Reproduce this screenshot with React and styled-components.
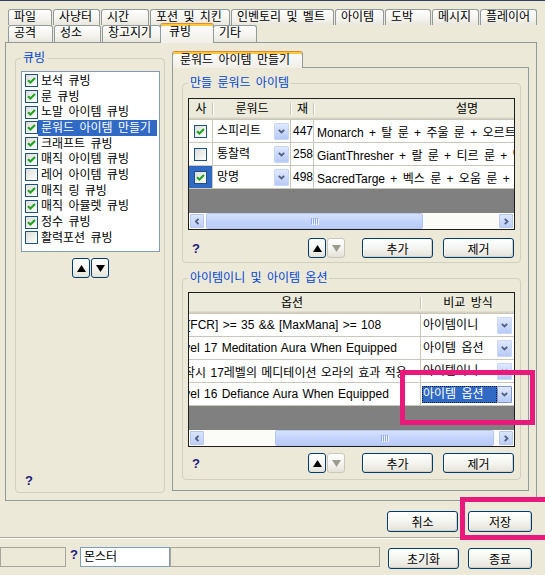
import styled, { createGlobalStyle, css } from "styled-components";

const FONT = `"Liberation Sans", "Noto Sans CJK KR", sans-serif`;

const GlobalStyle = createGlobalStyle`
  * { box-sizing: border-box; }
  html, body { margin: 0; padding: 0; background: #ece9d8; }
  body { font-family: ${FONT}; font-size: 12px; word-spacing: 2px; color: #000; }
`;

const Window = styled.div`
  position: relative;
  width: 545px;
  height: 575px;
  overflow: hidden;
  background: #ece9d8;
`;

const TopEdge = styled.div`
  height: 1px;
  background: #33425e;
`;

/* ---------- tabs ---------- */

const TabStrip = styled.div`
  padding: 8px 0 0 8px;
`;

const TabRow = styled.div`
  display: flex;
  align-items: flex-end;
  gap: 1px;
  height: ${(p) => p.$h}px;
`;

const Tab = styled.div`
  flex: none;
  width: ${(p) => p.$w}px;
  height: 100%;
  padding-left: 5px;
  border: 1px solid #919b9c;
  border-bottom: none;
  border-radius: 3px 3px 0 0;
  background: linear-gradient(#ffffff, #f4f3ee 60%, #e8e6dc);
  line-height: 15px;
  white-space: nowrap;
  overflow: hidden;

  ${(p) =>
    p.$active &&
    css`
      position: relative;
      z-index: 2;
      height: calc(100% + 3px);
      margin: 0 -2px -1px;
      padding-left: 8px;
      border-top: 1px solid #e68b2c;
      box-shadow: inset 0 2px 0 #ffc83c;
      background: linear-gradient(#fcfcfe, #f1efe6);
      line-height: 17px;
    `}
`;

const SubTab = styled(Tab)`
  margin: 0 0 -1px 0;
  height: 17px;
  padding-left: 7px;
`;

const MainPanel = styled.div`
  display: flex;
  gap: 7px;
  width: 532px;
  height: 459px;
  margin-left: 5px;
  padding: 8px 7px 7px 9px;
  border: 1px solid #919b9c;
  background: #ece9d8;
`;

const SubTabs = styled.div`
  flex: 1;
  min-width: 0;
  display: flex;
  flex-direction: column;
  margin-bottom: 2px;
`;

const SubPanel = styled.div`
  flex: 1;
  min-width: 0;
  display: flex;
  flex-direction: column;
  padding: 8px 7px 0 9px;
  border: 1px solid #919b9c;
`;

/* ---------- group box ---------- */

const Group = styled.fieldset`
  display: flex;
  flex-direction: column;
  flex: none;
  width: ${(p) => (p.$w ? `${p.$w}px` : "auto")};
  min-width: 0;
  margin: ${(p) => p.$mt || 0}px 0 0;
  padding: ${(p) => p.$pad};
  border: 1px solid #d0d0bf;
  border-radius: 4px;
`;

const Legend = styled.legend`
  padding: 0 2px;
  color: #0046d5;
  line-height: 14px;
`;

const Help = styled.span`
  margin-left: ${(p) => p.$ml || 0}px;
  margin-top: ${(p) => (p.$bottom ? "auto" : "0")};
  font: bold 13px "Liberation Sans", sans-serif;
  line-height: 15px;
  color: #1c1c80;
`;

/* ---------- check list ---------- */

const CheckList = styled.div`
  height: 181px;
  padding: 1px 1px 0 2px;
  background: #fff;
  border: 1px solid #7f9db9;
`;

const ListItem = styled.div`
  display: flex;
  align-items: center;
  height: 15.7px;
`;

const ItemLabel = styled.span`
  flex: 1;
  height: 16px;
  margin-right: 1px;
  padding-left: 3px;
  line-height: 16px;
  white-space: nowrap;
  overflow: hidden;
  background: ${(p) => (p.$sel ? "#316ac5" : "transparent")};
  color: ${(p) => (p.$sel ? "#fff" : "#000")};
`;

const Box = styled.span`
  flex: none;
  display: flex;
  align-items: center;
  justify-content: center;
  width: 13px;
  height: 13px;
  margin-left: ${(p) => p.$ml || 0}px;
  border: 1px solid #1c5180;
  background: linear-gradient(135deg, #dcdcd7, #ffffff);
`;

const CheckBox = ({ checked, ml }) => (
  <Box $ml={ml}>
    {checked && (
      <svg width="9" height="9" viewBox="0 0 9 9">
        <path d="M1 4.2 L3.4 6.6 L8 2" stroke="#21a121" strokeWidth="2.1" fill="none" />
      </svg>
    )}
  </Box>
);

/* ---------- buttons ---------- */

const Button = styled.button`
  flex: none;
  width: ${(p) => p.$w}px;
  height: ${(p) => p.$h || 21}px;
  margin-top: ${(p) => p.$mt || 0}px;
  padding: 0;
  border: 1px solid #003c74;
  border-radius: 3px;
  background: linear-gradient(#ffffff, #f3f3ef 55%, #e4e1d6);
  box-shadow: inset -1px -1px 0 #d6d0c5, inset 1px 1px 0 #fff;
  font: 12px ${FONT};
  color: #000;
`;

const ArrowPair = styled.div`
  display: flex;
  flex: none;
  gap: 1px;
  justify-content: ${(p) => (p.$center ? "center" : "flex-start")};
  margin: ${(p) => p.$m || "0"};
`;

const ArrowBtn = styled.button`
  display: flex;
  align-items: center;
  justify-content: center;
  width: 18px;
  height: 20px;
  padding: 0;
  border: 1px solid ${(p) => (p.disabled ? "#c9c7ba" : "#003c74")};
  border-radius: 3px;
  background: linear-gradient(#ffffff, #f3f3ef 55%, #e4e1d6);
`;

const Arrow = ({ down, disabled }) => (
  <svg width="9" height="7" viewBox="0 0 9 7">
    <polygon
      points={down ? "0,0 9,0 4.5,7" : "0,7 9,7 4.5,0"}
      fill={disabled ? "#9c9a8c" : "#000"}
    />
  </svg>
);

const Toolbar = styled.div`
  display: flex;
  align-items: center;
  flex: none;
  height: 20px;
  margin-top: ${(p) => p.$mt}px;
`;

const Spacer = styled.div`
  flex: 1;
`;

const ToolButtons = styled.div`
  display: flex;
  flex: none;
  gap: 10px;
  margin: 0 1px 0 17px;
`;

/* ---------- data grid ---------- */

const Grid = styled.div`
  display: flex;
  flex-direction: column;
  flex: none;
  min-width: 0;
  height: ${(p) => p.$h}px;
  border: 1px solid #1e1e1e;
  background: #808080;
  overflow: hidden;
`;

const HeadRow = styled.div`
  display: flex;
  flex: none;
  height: 21px;
  background: #ebeadb;
  box-shadow: inset 0 -1px 0 #cbc7b8, inset 0 -2px 0 #d6d2c2, inset 0 -3px 0 #e2decd;
`;

const HeadCell = styled.div`
  position: relative;
  flex: none;
  width: ${(p) => p.$w}px;
  padding-right: ${(p) => p.$pr || 0}px;
  line-height: 20px;
  text-align: center;
  white-space: nowrap;

  &::after {
    content: "";
    position: absolute;
    right: 0;
    top: 4px;
    bottom: 5px;
    width: 1px;
    background: #c7c5b2;
    box-shadow: 1px 0 0 #fff;
  }
`;

const BodyRow = styled.div`
  display: flex;
  flex: none;
  height: 23px;
  background: #fff;
  border-bottom: 1px solid #c9c7ba;
`;

const Cell = styled.div`
  display: flex;
  align-items: center;
  flex: none;
  width: ${(p) => p.$w}px;
  padding-left: ${(p) => p.$pl || 0}px;
  justify-content: ${(p) => (p.$center ? "center" : "flex-start")};
  border-right: 1px solid #c9c7ba;
  overflow: hidden;
  white-space: nowrap;
  background: ${(p) => (p.$sel ? "#316ac5" : "transparent")};
`;

const Shifted = styled.span`
  flex: none;
  margin-left: ${(p) => p.$indent}px;
  word-spacing: 1px;
`;

const ComboText = styled.span`
  flex: 1;
  height: 17px;
  margin-left: 1px;
  padding-left: ${(p) => p.$pl}px;
  line-height: 15px;
  border: 1px dotted ${(p) => (p.$sel ? "#0d1b3a" : "transparent")};
  background: ${(p) => (p.$sel ? "#316ac5" : "transparent")};
  color: ${(p) => (p.$sel ? "#fff" : "#000")};
  overflow: hidden;
`;

const DropBtn = styled.span`
  display: flex;
  align-items: center;
  justify-content: center;
  flex: none;
  width: 15px;
  height: 17px;
  margin-right: ${(p) => p.$mr}px;
  border: 1px solid ${(p) => (p.$focus ? "#7d97cf" : "#c7d6fb")};
  border-radius: 1px;
  background: linear-gradient(#dfe8fe, #b7caf6);
`;

const Chevron = ({ dir = "down" }) => {
  const pts = {
    down: "0.8,0.8 3.5,3.5 6.2,0.8",
    left: "3.5,0.8 0.8,3.5 3.5,6.2",
    right: "0.8,0.8 3.5,3.5 0.8,6.2",
  }[dir];
  const size = dir === "down" ? [7, 5] : [5, 7];
  return (
    <svg width={size[0]} height={size[1]} viewBox={`0 0 ${size[0]} ${size[1]}`}>
      <polyline points={pts} stroke="#4d6185" strokeWidth="1.8" fill="none" />
    </svg>
  );
};

const Filler = styled.div`
  flex: 1;
`;

const HScroll = styled.div`
  display: flex;
  flex: none;
  height: 16px;
  background: #fbfbf8;
`;

const ScrollBtn = styled.span`
  display: flex;
  align-items: center;
  justify-content: center;
  flex: none;
  width: 16px;
  height: 16px;
  border: 1px solid #fff;
  border-radius: 2px;
  background: linear-gradient(#dde7fd, #bccdf6);
  box-shadow: inset 0 0 0 1px #b5c8f3;
`;

const Track = styled.div`
  display: flex;
  flex: 1;
  min-width: 0;
`;

const Thumb = styled.div`
  display: flex;
  align-items: center;
  justify-content: center;
  gap: 1px;
  flex: none;
  width: ${(p) => p.$w}px;
  margin-left: ${(p) => p.$at}px;
  border: 1px solid #b3c6f1;
  border-radius: 2px;
  background: linear-gradient(#d6e1fd, #c3d3fa 50%, #b9cbf6);
`;

const Grip = styled.span`
  width: 1px;
  height: 6px;
  background: #8ea9e6;
  box-shadow: 1px 1px 0 #eef3ff;
`;

const ScrollBar = ({ at, w }) => (
  <HScroll>
    <ScrollBtn>
      <Chevron dir="left" />
    </ScrollBtn>
    <Track>
      <Thumb $at={at} $w={w}>
        <Grip />
        <Grip />
        <Grip />
        <Grip />
      </Thumb>
    </Track>
    <ScrollBtn>
      <Chevron dir="right" />
    </ScrollBtn>
  </HScroll>
);

/* ---------- footer ---------- */

const ActionRow = styled.div`
  display: flex;
  justify-content: flex-end;
  gap: 10px;
  margin-top: 10px;
  padding-right: 13px;
`;

const Separator = styled.div`
  margin-top: 5px;
  height: 2px;
  border-top: 1px solid #aca899;
  border-bottom: 1px solid #fff;
`;

const StatusRow = styled.div`
  display: flex;
  align-items: flex-start;
  margin-top: 8px;
`;

const StatusBox = styled.div`
  flex: none;
  width: ${(p) => p.$w}px;
  height: 20px;
  border: 1px solid #a7a69c;
`;

const TextBox = styled.div`
  flex: none;
  width: 90px;
  height: 20px;
  margin-left: 2px;
  padding-left: 3px;
  line-height: 18px;
  border: 1px solid #7f9db9;
  background: #fff;
`;

const BottomButtons = styled.div`
  display: flex;
  gap: 9px;
  margin-left: 8px;
`;

const Marker = styled.div`
  position: absolute;
  left: ${(p) => p.$x}px;
  top: ${(p) => p.$y}px;
  width: ${(p) => p.$w}px;
  height: ${(p) => p.$h}px;
  border: 5px solid #e8197b;
  pointer-events: none;
`;

/* ---------- data ---------- */

const row1Tabs = [
  ["파일", 44],
  ["사냥터", 47],
  ["시간", 48],
  ["포션 및 치킨", 80],
  ["인벤토리 및 벨트", 103],
  ["아이템", 49],
  ["도박", 46],
  ["메시지", 47],
  ["플레이어", 57],
];

const row2Tabs = [
  ["공격", 45],
  ["성소", 47],
  ["창고지기", 59],
  ["큐빙", 54, true],
  ["기타", 44],
];

const cubeItems = [
  ["보석 큐빙", true],
  ["룬 큐빙", true],
  ["노말 아이템 큐빙", true],
  ["룬워드 아이템 만들기", true, true],
  ["크래프트 큐빙", true],
  ["매직 아이템 큐빙", true],
  ["레어 아이템 큐빙", false],
  ["매직 링 큐빙", true],
  ["매직 아뮬렛 큐빙", true],
  ["정수 큐빙", true],
  ["활력포션 큐빙", false],
];

const runewords = [
  { on: true, name: "스피리트", qty: 447, desc: "Monarch + 탈 룬 + 주울 룬 + 오르트 룬 + 암 룬" },
  { on: false, name: "통찰력", qty: 258, desc: "GiantThresher + 랄 룬 + 티르 룬 + 탈 룬 + 솔 룬" },
  { on: true, name: "망명", qty: 498, desc: "SacredTarge + 벡스 룬 + 오움 룬 + 이스트 룬 + 돌 룬", sel: true },
];

const options = [
  { text: "[FCR] >= 35 && [MaxMana] >= 108", indent: -2, mode: "아이템이니" },
  { text: "Level 17 Meditation Aura When Equipped", indent: -18, mode: "아이템 옵션" },
  { text: "장착시 17레벨의 메디테이션 오라의 효과 적용", indent: -16, mode: "아이템이니" },
  { text: "Level 16 Defiance Aura When Equipped", indent: -18, mode: "아이템 옵션", sel: true },
];

const GroupTools = () => (
  <>
    <Help $ml={4}>?</Help>
    <Spacer />
    <ArrowPair>
      <ArrowBtn>
        <Arrow />
      </ArrowBtn>
      <ArrowBtn disabled>
        <Arrow down disabled />
      </ArrowBtn>
    </ArrowPair>
    <ToolButtons>
      <Button $w={71} $h={20}>추가</Button>
      <Button $w={71} $h={20}>제거</Button>
    </ToolButtons>
  </>
);

export default function App() {
  return (
    <Window>
      <GlobalStyle />
      <TopEdge />
      <TabStrip>
        <TabRow $h={16}>
          {row1Tabs.map(([t, w]) => (
            <Tab key={t} $w={w}>
              {t}
            </Tab>
          ))}
        </TabRow>
        <TabRow $h={17}>
          {row2Tabs.map(([t, w, a]) => (
            <Tab key={t} $w={w} $active={a}>
              {t}
            </Tab>
          ))}
        </TabRow>
      </TabStrip>

      <MainPanel>
        <Group $w={150} $pad="6px 4px 4px 5px">
          <Legend>큐빙</Legend>
          <CheckList>
            {cubeItems.map(([t, on, sel]) => (
              <ListItem key={t}>
                <CheckBox checked={on} ml={1} />
                <ItemLabel $sel={sel}>{t}</ItemLabel>
              </ListItem>
            ))}
          </CheckList>
          <ArrowPair $center $m="6px 0 0">
            <ArrowBtn>
              <Arrow />
            </ArrowBtn>
            <ArrowBtn>
              <Arrow down />
            </ArrowBtn>
          </ArrowPair>
          <Help $ml={4} $bottom>
            ?
          </Help>
        </Group>

        <SubTabs>
          <TabRow $h={16}>
            <SubTab $w={131} $active>
              룬워드 아이템 만들기
            </SubTab>
          </TabRow>
          <SubPanel>
            <Group $pad="8px 5px 4px 5px">
              <Legend>만들 룬워드 아이템</Legend>
              <Grid $h={132}>
                <HeadRow>
                  <HeadCell $w={24}>사</HeadCell>
                  <HeadCell $w={78}>룬워드</HeadCell>
                  <HeadCell $w={23}>재</HeadCell>
                  <HeadCell $w={306}>설명</HeadCell>
                </HeadRow>
                {runewords.map((r) => (
                  <BodyRow key={r.name}>
                    <Cell $w={24} $center $sel={r.sel}>
                      <CheckBox checked={r.on} />
                    </Cell>
                    <Cell $w={78}>
                      <ComboText $pl={2}>{r.name}</ComboText>
                      <DropBtn $mr={1}>
                        <Chevron />
                      </DropBtn>
                    </Cell>
                    <Cell $w={23} $pl={2}>
                      {r.qty}
                    </Cell>
                    <Cell $w={306} $pl={3}>
                      {r.desc}
                    </Cell>
                  </BodyRow>
                ))}
                <Filler />
                <ScrollBar at={1} w={217} />
              </Grid>
              <Toolbar $mt={8}>
                <GroupTools />
              </Toolbar>
            </Group>

            <Group $mt={8} $pad="7px 5px 6px 5px">
              <Legend>아이템이니 및 아이템 옵션</Legend>
              <Grid $h={155}>
                <HeadRow>
                  <HeadCell $w={232} $pr={26}>
                    옵션
                  </HeadCell>
                  <HeadCell $w={94}>비교 방식</HeadCell>
                </HeadRow>
                {options.map((o) => (
                  <BodyRow key={o.text}>
                    <Cell $w={232}>
                      <Shifted $indent={o.indent}>{o.text}</Shifted>
                    </Cell>
                    <Cell $w={94}>
                      <ComboText $pl={0} $sel={o.sel}>
                        {o.mode}
                      </ComboText>
                      <DropBtn $mr={2} $focus={o.sel}>
                        <Chevron />
                      </DropBtn>
                    </Cell>
                  </BodyRow>
                ))}
                <Filler />
                <ScrollBar at={70} w={219} />
              </Grid>
              <Toolbar $mt={6}>
                <GroupTools />
              </Toolbar>
            </Group>
          </SubPanel>
        </SubTabs>
      </MainPanel>

      <ActionRow>
        <Button $w={71}>취소</Button>
        <Button $w={64}>저장</Button>
      </ActionRow>
      <Separator />
      <StatusRow>
        <StatusBox $w={66} />
        <Help $ml={4}>?</Help>
        <TextBox>몬스터</TextBox>
        <StatusBox $w={210} />
        <BottomButtons>
          <Button $w={71} $mt={1}>
            초기화
          </Button>
          <Button $w={64} $mt={1}>
            종료
          </Button>
        </BottomButtons>
      </StatusRow>

      <Marker $x={400} $y={370} $w={135} $h={55} />
      <Marker $x={460} $y={497} $w={100} $h={43} />
    </Window>
  );
}
